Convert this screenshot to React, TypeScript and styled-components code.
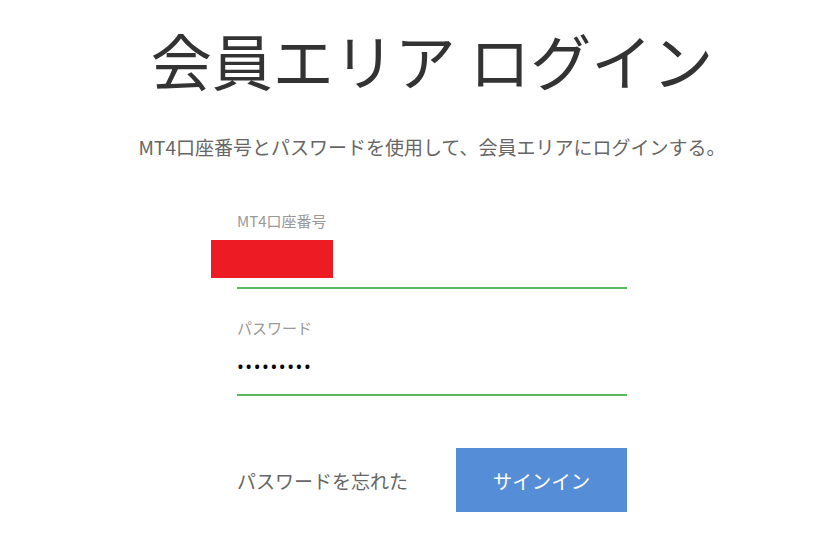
import React from 'react';
import styled, { createGlobalStyle } from 'styled-components';

const GlobalStyle = createGlobalStyle`
  body {
    margin: 0;
    padding: 0;
    background: #ffffff;
    font-family: "Noto Sans CJK JP", "Noto Sans", sans-serif;
  }
`;

const Page = styled.div`
  width: 838px;
  padding-left: 26px;
  box-sizing: border-box;
  display: flex;
  flex-direction: column;
  align-items: center;
`;

const Title = styled.h1`
  margin: 18px 0 0;
  font-size: 61px;
  font-weight: 400;
  line-height: 84px;
  color: #333333;
`;

const Lead = styled.p`
  margin: 32px 0 0;
  font-size: 19px;
  line-height: 26px;
  color: #666666;
`;

const Form = styled.form`
  width: 390px;
  margin-top: 51px;
  display: flex;
  flex-direction: column;
  gap: 29px;
`;

const Field = styled.div`
  position: relative;
  display: flex;
  flex-direction: column;
`;

const Label = styled.label`
  font-size: 15px;
  line-height: 20px;
  color: #999999;
`;

const Input = styled.input`
  border: none;
  border-bottom: 2px solid #5cb85c;
  outline: none;
  padding: 0;
  height: 56px;
  font-size: 18px;
  color: #000000;
  font-family: "Noto Sans", sans-serif;
  letter-spacing: 1.6px;
  background: transparent;
`;

const Redaction = styled.div`
  position: absolute;
  left: -26px;
  top: 29px;
  width: 122px;
  height: 38px;
  background: #ed1c24;
`;

const Actions = styled.div`
  margin-top: 23px;
  display: flex;
  align-items: center;
  justify-content: space-between;
`;

const Forgot = styled.a`
  font-size: 19px;
  color: #666666;
  text-decoration: none;
`;

const SignIn = styled.button`
  width: 171px;
  height: 64px;
  border: none;
  background: #558dd6;
  color: #ffffff;
  font-size: 19.5px;
  font-family: "Noto Sans CJK JP", sans-serif;
  cursor: pointer;
`;

const App: React.FC = () => (
  <>
    <GlobalStyle />
    <Page>
      <Title>会員エリア ログイン</Title>
      <Lead>MT4口座番号とパスワードを使用して、会員エリアにログインする。</Lead>
      <Form onSubmit={e => e.preventDefault()}>
        <Field>
          <Label>MT4口座番号</Label>
          <Input type="text" defaultValue="" />
          <Redaction />
        </Field>
        <Field>
          <Label>パスワード</Label>
          <Input type="password" defaultValue="123456789" />
        </Field>
        <Actions>
          <Forgot href="#">パスワードを忘れた</Forgot>
          <SignIn type="submit">サインイン</SignIn>
        </Actions>
      </Form>
    </Page>
  </>
);

export default App;
